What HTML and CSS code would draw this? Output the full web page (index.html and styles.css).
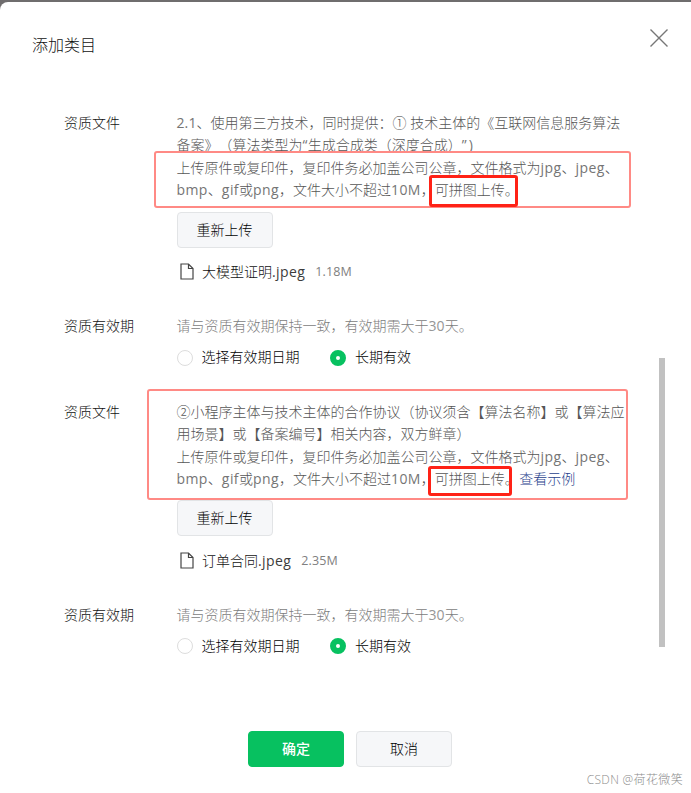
FILE: index.html
```html
<!DOCTYPE html>
<html lang="zh-CN">
<head>
<meta charset="utf-8">
<title>添加类目</title>
<link rel="stylesheet" href="styles.css">
</head>
<body>
<main class="dialog">
  <header class="dialog-head">
    <h1 class="title">添加类目</h1>
    <svg class="close" viewBox="0 0 18 18" width="18" height="18"><path d="M.5.5l17 17M17.5.5l-17 17"/></svg>
  </header>

  <div class="form">
    <section class="row">
      <div class="label">资质文件</div>
      <div class="content">
        <p class="desc">
          <span class="line"><b class="num">2.1</b>、使用第三方技术，同时提供：① 技术主体的《互联网信息服务算法</span>
          <span class="line">备案》（算法类型为<b>“</b>生成合成类（深度合成）<b class="quote">”)</b></span>
          <span class="line">上传原件或复印件，复印件务必加盖公司公章，文件格式为<b>jpg</b>、<b>jpeg</b>、</span>
          <span class="line"><b>bmp</b>、<b>gif</b>或<b>png</b>，文件大小不超过<b>10M</b>，可拼图上传。</span>
        </p>
        <button class="btn upload">重新上传</button>
        <div class="file">
          <svg class="file-icon" viewBox="0 0 14 17" width="14" height="17"><path d="M1 1h7.500L13 5.500V16H1zM8.500 1v4.500H13"/></svg>
          <span class="file-name">大模型证明<b>.jpeg</b></span><b class="size">1.18M</b>
        </div>
      </div>
    </section>

    <section class="row">
      <div class="label">资质有效期</div>
      <div class="content">
        <p class="hint">请与资质有效期保持一致，有效期需大于<b class="num">30</b>天。</p>
        <div class="options">
          <label class="option"><i class="radio"></i>选择有效期日期</label>
          <label class="option"><i class="radio on"></i>长期有效</label>
        </div>
      </div>
    </section>

    <section class="row">
      <div class="label">资质文件</div>
      <div class="content">
        <p class="desc">
          <span class="line">②小程序主体与技术主体的合作协议（协议须含【算法名称】或【算法应</span>
          <span class="line">用场景】或【备案编号】相关内容，双方鲜章）</span>
          <span class="line">上传原件或复印件，复印件务必加盖公司公章，文件格式为<b>jpg</b>、<b>jpeg</b>、</span>
          <span class="line"><b>bmp</b>、<b>gif</b>或<b>png</b>，文件大小不超过<b>10M</b>，可拼图上传。<a class="link">查看示例</a></span>
        </p>
        <button class="btn upload">重新上传</button>
        <div class="file">
          <svg class="file-icon" viewBox="0 0 14 17" width="14" height="17"><path d="M1 1h7.500L13 5.500V16H1zM8.500 1v4.500H13"/></svg>
          <span class="file-name">订单合同<b>.jpeg</b></span><b class="size">2.35M</b>
        </div>
      </div>
    </section>

    <section class="row">
      <div class="label">资质有效期</div>
      <div class="content">
        <p class="hint">请与资质有效期保持一致，有效期需大于<b class="num">30</b>天。</p>
        <div class="options">
          <label class="option"><i class="radio"></i>选择有效期日期</label>
          <label class="option"><i class="radio on"></i>长期有效</label>
        </div>
      </div>
    </section>
  </div>

  <footer class="actions">
    <button class="btn primary">确定</button>
    <button class="btn">取消</button>
  </footer>

  <div class="scrollbar"></div>
  <div class="mark mark-a"></div>
  <div class="mark strong mark-b"></div>
  <div class="mark mark-c"></div>
  <div class="mark strong mark-d"></div>
  <div class="watermark">CSDN @荷花微笑</div>
</main>
</body>
</html>
```
FILE: styles.css
```css
* { box-sizing: border-box; }
body {
  margin: 0;
  padding-top: 2px;
  height: 793px;
  overflow: hidden;
  background: #6f6d6e;
  font: 14px/22.4px "Open Sans", "Noto Sans CJK SC", sans-serif;
  font-weight: 300;
  color: #111;
  text-spacing-trim: space-all;
}
p, h1 { margin: 0; }
b { font-weight: 400; letter-spacing: .42px; }
.dialog {
  position: relative;
  height: 791px;
  background: #fff;
  border-radius: 8px 0 0 0;
}
.dialog-head {
  display: flex;
  justify-content: space-between;
  height: 110px;
  padding: 27px 23px 0 32px;
}
.title { font-size: 16px; line-height: 32px; font-weight: 300; }
.close { fill: none; stroke: #777; stroke-width: 1.4; }
.form { display: flex; flex-direction: column; height: 619px; padding-left: 64px; }
.row { display: flex; margin-bottom: 32px; }
.row:nth-child(2) { margin-bottom: 33px; }
.label { width: 112.5px; flex: none; }
.desc { color: #565656; margin-bottom: 10.4px; }
.desc b { color: #757575; }
.line { display: block; height: 22.4px; white-space: nowrap; }
b.num { letter-spacing: .1px; }
b.quote { letter-spacing: 2px; }
.hint { color: #7c7c7c; height: 22px; }
.hint b { color: #969696; }
.link { color: #1f418c; margin-left: .5px; }
.btn {
  display: block;
  width: 96px;
  height: 36px;
  padding: 0;
  border: 1px solid #e2e4e6;
  border-radius: 4px;
  background: #f6f7f9;
  color: #000;
  font: inherit;
}
.row:nth-child(3) .desc { margin-bottom: 9.4px; }
.row:nth-child(3) .file { margin-top: 14px; }
.upload { margin-left: .5px; padding-right: 1px; }
.file { display: flex; align-items: center; height: 22px; margin: 13px 0 0 3.5px; }
.file-icon { fill: none; stroke: #444; stroke-width: 1.2; margin-right: 8px; }
.file-name b { color: #3c3c3c; }
.size { font-size: 12.5px; color: #808080; margin-left: 10px; letter-spacing: .1px; }
.options { display: flex; gap: 30px; margin: 9px 0 0 .5px; height: 22px; color: #000; }
.option { display: flex; align-items: center; }
.radio { width: 16px; height: 16px; border: 1px solid #ddd; border-radius: 50%; margin-right: 8.5px; }
.radio.on { border: 6px solid #07c160; margin-right: 9.5px; }
.row:nth-child(2) .radio { margin-top: 2px; }
.actions { display: flex; gap: 12px; padding-left: 248px; }
.primary { background: #07c160; border-color: #07c160; color: #fff; font-weight: 500; }
.scrollbar { position: absolute; left: 659px; top: 356px; width: 6px; height: 289px; background: #c1c1c1; }
.mark { position: absolute; border: 2px solid #ff8a85; border-radius: 3px; }
.strong { border: 3px solid #ff2216; }
.mark-a { left: 154px; top: 149px; width: 477px; height: 57px; }
.mark-b { left: 429px; top: 173px; width: 89px; height: 32px; }
.mark-c { left: 147px; top: 387px; width: 481px; height: 111px; }
.mark-d { left: 428px; top: 464px; width: 84px; height: 30px; }
.watermark { position: absolute; right: 8px; bottom: 2px; font-size: 12px; color: #8c8c8c; letter-spacing: .35px; }
```
